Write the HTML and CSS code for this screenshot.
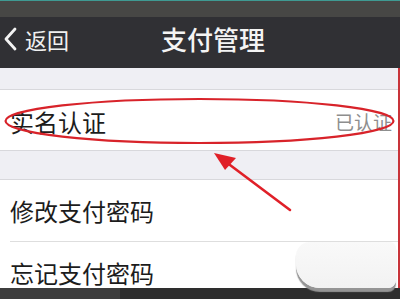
FILE: index.html
```html
<!DOCTYPE html>
<html lang="zh">
<head>
<meta charset="utf-8">
<link rel="stylesheet" href="styles.css">
</head>
<body>
<div class="screen">
  <div class="status"></div>
  <div class="nav">
    <div class="back">
      <svg class="chev" width="14" height="24" viewBox="0 0 14 24"><path d="M11 2 L2 12 L11 22" fill="none" stroke="#f2f2f2" stroke-width="2.8" stroke-linecap="round" stroke-linejoin="round"/></svg>
      <span class="back-text">返回</span>
    </div>
    <div class="title">支付管理</div>
  </div>
  <div class="gap gap-top"></div>
  <div class="row row-first">
    <span class="label">实名认证</span>
    <span class="value">已认证</span>
  </div>
  <div class="gap gap-mid"></div>
  <div class="row row-second">
    <span class="label">修改支付密码</span>
  </div>
  <div class="row row-third">
    <span class="label">忘记支付密码</span>
  </div>
  <div class="bottom">
    <div class="bottom-left"></div>
    <div class="bottom-right"></div>
  </div>
  <div class="blob"></div>
  <div class="edge"></div>
  <svg class="marks" width="400" height="299" viewBox="0 0 400 299">
    <ellipse cx="199.5" cy="121" rx="194" ry="22" fill="none" stroke="#d8232a" stroke-width="2.2"/>
    <line x1="290" y1="210" x2="226" y2="162" stroke="#e02028" stroke-width="2.6" stroke-linecap="round"/>
    <polygon points="214,153 236,158 225,170" fill="#e02028"/>
  </svg>
</div>
</body>
</html>
```

FILE: styles.css
```css
html, body {
  margin: 0;
  padding: 0;
}
body {
  width: 400px;
  height: 299px;
  overflow: hidden;
  font-family: "Noto Sans CJK SC", "Noto Sans", sans-serif;
}
.screen {
  position: relative;
  width: 400px;
  height: 299px;
  overflow: hidden;
  background: #ffffff;
}
.status {
  height: 16px;
  background: #474745;
  border-top: 1px solid #3f9a92;
}
.nav {
  height: 51px;
  background: #303034;
  display: flex;
  align-items: center;
  position: relative;
  box-sizing: border-box;
  padding-bottom: 8px;
}
.back {
  display: flex;
  align-items: center;
  padding-left: 4px;
  gap: 7px;
  color: #f0f0f0;
}
.chev {
  display: block;
}
.back-text {
  font-size: 22px;
  line-height: 24px;
}
.title {
  position: absolute;
  left: 0;
  right: 0;
  top: 0;
  bottom: 8px;
  display: flex;
  align-items: center;
  justify-content: center;
  padding-left: 26px;
  color: #f4f4f4;
  font-size: 26px;
  font-weight: 500;
}
.gap {
  background: #efeff4;
  border-bottom: 1px solid #d8d8dc;
}
.gap-top {
  height: 21px;
}
.gap-mid {
  height: 28px;
  border-top: 1px solid #d8d8dc;
}
.row {
  display: flex;
  align-items: center;
  justify-content: space-between;
  background: #ffffff;
  padding: 0 10px;
}
.row-first {
  box-sizing: border-box;
  height: 60px;
  padding-top: 2px;
  padding-right: 8px;
}
.row-second {
  height: 61px;
  margin-left: 10px;
  padding-left: 0;
  border-bottom: 1px solid #dedede;
}
.row-third {
  height: 46px;
  padding-top: 15px;
  box-sizing: border-box;
}
.label {
  font-size: 24px;
  color: #1c1c1c;
}
.value {
  font-size: 19px;
  color: #8e8e8e;
}
.bottom {
  height: 11px;
  display: flex;
}
.bottom-left {
  width: 120px;
  background: #3d3d3d;
}
.bottom-right {
  flex: 1;
  background: #2e2e2e;
}
.blob {
  position: absolute;
  left: 296px;
  top: 242px;
  width: 100px;
  height: 46px;
  background: linear-gradient(#f9f9f9, #f2f2f2);
  border-radius: 14px 6px 8px 24px;
  box-shadow: 0 4px 1px #959595;
}
.edge {
  position: absolute;
  right: 0;
  top: 68px;
  width: 2px;
  height: 220px;
  background: #c8343a;
}
.marks {
  position: absolute;
  left: 0;
  top: 0;
}
```
